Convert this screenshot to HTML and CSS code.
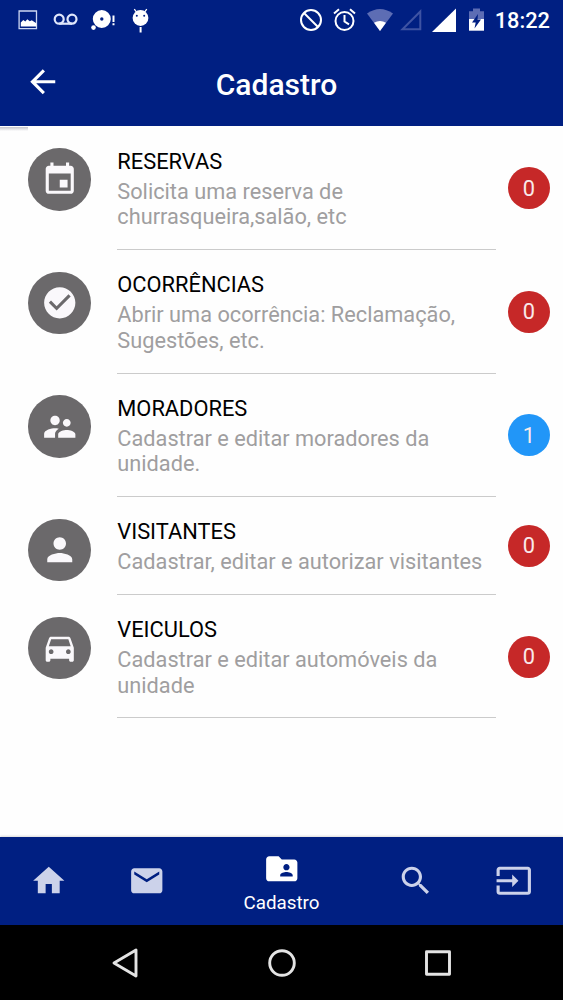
FILE: index.html
```
<!DOCTYPE html>
<html lang="pt-BR">
<head>
  <meta charset="UTF-8">
  <title>Cadastro</title>
  <link rel="stylesheet" href="styles.css">
</head>
<body>
  <div class="statusbar">
    <div class="notifications">
      <svg viewBox="-12 -12 24 24"><path d="M-8.7-9H8.7V8.6H-8.7z" fill="none" stroke="#cdd7f2" stroke-width="1.3"/><path d="M-7 6.500V2.500l2.500-2.500 2 1.500 2-2.200 2.500 2 2-1 4.500 3V6.500z"/></svg>
      <svg viewBox="-12 -12 24 24"><g fill="none" stroke="#dfe6fb" stroke-width="2.2"><circle cx="-6.6" cy="-.8" r="4.5"/><circle cx="6.2" cy="-.8" r="4.5"/><path d="M-6.6 3.7H6.2"/></g></svg>
      <svg viewBox="-12 -12 24 24"><path fill-rule="evenodd" d="M-10-1a9 9 0 1 0 18 0a9 9 0 1 0-18 0M-2.7-1a1.7 1.7 0 1 0 3.4 0a1.7 1.7 0 1 0-3.4 0"/><circle cx="-9.3" cy="7.6" r="2.3"/><path d="M9.7-4.5h2V2h-2zM9.7 3.3h2V5.200h-2z"/></svg>
      <svg viewBox="-12 -12 24 24"><path d="M-6.5-10.8l3 4M6-10.8l-3 4" stroke="#fff" stroke-width="1.3"/><circle cx="-.3" cy="-2" r="7.9"/><circle class="cut" cx="-4" cy="-4.2" r="1"/><circle class="cut" cx="3.4" cy="-4.2" r="1"/><path d="M-1.2 7H.8v5.5h-2z"/></svg>
    </div>
    <div class="system">
      <svg viewBox="-16.500 -16 32 32"><g fill="none" stroke="#fff" stroke-width="2"><circle cx="-.5" cy="0" r="10"/><path d="M-7.500-7L6.500 7"/></g></svg>
      <svg viewBox="-16.500 -16 32 32"><g fill="none" stroke="#fff" stroke-width="2"><circle cx="0" cy="1" r="9"/><path d="M0-5V1.5L4.5 4.3M-10.5-6.5l5-4.2M10.5-6.5l-5-4.2"/></g></svg>
      <svg viewBox="-19 -16 32 32"><path class="dim" d="M-13-6.500Q0-15.500 13-6.500L0 11z"/><path d="M-6 2.800Q0-.8 6 2.800L0 11z"/></svg>
      <svg viewBox="-17 -16 32 32"><path d="M9.3-8.5V9.2H-8.5z" fill="none" stroke="#3e53a3" stroke-width="2"/></svg>
      <svg viewBox="-17.500 -16 32 32"><path d="M11.5-11.5V12h-24z"/></svg>
      <svg viewBox="-16.500 -16 32 32"><path class="dim" d="M-7.5-8.7h4V-11.500h7v2.8h4V0h-15z"/><path d="M-7.500-1h15V10.700h-15z"/><path class="cut" d="M1.500-6L-4.500 2.500h3.700L-2 8.500 4.500-.5H1z"/></svg>
      <span class="clock">18:22</span>
    </div>
  </div>

  <header>
    <svg class="icon back" viewBox="0 0 24 24"><path d="M20 11H7.830l5.590-5.590L12 4l-8 8 8 8 1.410-1.410L7.830 13H20v-2z"/></svg>
    <h1>Cadastro</h1>
  </header>

  <main>
    <div class="item">
      <div class="avatar"><svg class="icon" viewBox="0 0 24 24"><path d="M17 12h-5v5h5v-5zM16 1v2H8V1H6v2H5c-1.110 0-1.990.9-1.990 2L3 19c0 1.100.89 2 2 2h14c1.100 0 2-.9 2-2V5c0-1.100-.9-2-2-2h-1V1h-2zm3 18H5V8h14v11z"/></svg></div>
      <div class="content">
        <h2>RESERVAS</h2>
        <p>Solicita uma reserva de<br>churrasqueira,salão, etc</p>
      </div>
      <span class="badge">0</span>
    </div>
    <div class="item">
      <div class="avatar"><svg class="icon" viewBox="0 0 24 24"><path d="M12 2C6.480 2 2 6.480 2 12s4.480 10 10 10 10-4.480 10-10S17.520 2 12 2zm-2 15l-5-5 1.410-1.410L10 14.170l7.590-7.590L19 8l-9 9z"/></svg></div>
      <div class="content">
        <h2>OCORRÊNCIAS</h2>
        <p>Abrir uma ocorrência: Reclamação,<br>Sugestões, etc.</p>
      </div>
      <span class="badge">0</span>
    </div>
    <div class="item">
      <div class="avatar"><svg class="icon" viewBox="0 0 24 24"><path d="M16.500 12c1.380 0 2.490-1.120 2.490-2.500S17.880 7 16.500 7 14 8.120 14 9.500s1.120 2.500 2.500 2.500zM9 11c1.660 0 2.990-1.340 2.990-3S10.660 5 9 5 6 6.340 6 8s1.340 3 3 3zm7.500 3c-1.830 0-5.500.92-5.500 2.750V19h11v-2.250c0-1.830-3.670-2.750-5.500-2.750zM9 13c-2.330 0-7 1.170-7 3.500V19h7v-2.250c0-.85.330-2.340 2.370-3.470C10.500 13.100 9.660 13 9 13z"/></svg></div>
      <div class="content">
        <h2>MORADORES</h2>
        <p>Cadastrar e editar moradores da<br>unidade.</p>
      </div>
      <span class="badge info">1</span>
    </div>
    <div class="item">
      <div class="avatar"><svg class="icon" viewBox="0 0 24 24"><path d="M12 12c2.210 0 4-1.790 4-4s-1.790-4-4-4-4 1.790-4 4 1.790 4 4 4zm0 2c-2.670 0-8 1.340-8 4v2h16v-2c0-2.660-5.330-4-8-4z"/></svg></div>
      <div class="content">
        <h2>VISITANTES</h2>
        <p>Cadastrar, editar e autorizar visitantes</p>
      </div>
      <span class="badge">0</span>
    </div>
    <div class="item">
      <div class="avatar"><svg class="icon" viewBox="0 0 24 24"><path d="M18.920 6.010C18.720 5.420 18.160 5 17.500 5h-11c-.66 0-1.210.42-1.420 1.010L3 12v8c0 .55.450 1 1 1h1c.55 0 1-.45 1-1v-1h12v1c0 .55.450 1 1 1h1c.55 0 1-.45 1-1v-8l-2.080-5.990zM6.500 16c-.83 0-1.500-.67-1.500-1.500S5.670 13 6.500 13s1.500.67 1.500 1.500S7.330 16 6.500 16zm11 0c-.83 0-1.500-.67-1.500-1.500s.67-1.500 1.500-1.500 1.500.67 1.500 1.500-.67 1.500-1.500 1.500zM5 11l1.500-4.500h11L19 11H5z"/></svg></div>
      <div class="content">
        <h2>VEICULOS</h2>
        <p>Cadastrar e editar automóveis da<br>unidade</p>
      </div>
      <span class="badge">0</span>
    </div>
  </main>

  <nav class="tabs">
    <a class="tab"><svg class="icon" viewBox="0 0 24 24"><path d="M10 20v-6h4v6h5v-8h3L12 3 2 12h3v8z"/></svg></a>
    <a class="tab"><svg class="icon" viewBox="0 0 24 24"><path d="M20 4H4c-1.100 0-1.990.9-1.990 2L2 18c0 1.100.9 2 2 2h16c1.100 0 2-.9 2-2V6c0-1.100-.9-2-2-2zm0 4l-8 5-8-5V6l8 5 8-5v2z"/></svg></a>
    <a class="tab active">
      <svg class="icon" viewBox="0 0 24 24"><path d="M20 6h-8l-2-2H4c-1.100 0-1.990.9-1.990 2L2 18c0 1.100.9 2 2 2h16c1.100 0 2-.9 2-2V8c0-1.100-.9-2-2-2zm-5 3c1.100 0 2 .9 2 2s-.9 2-2 2-2-.9-2-2 .9-2 2-2zm4 8h-8v-1c0-1.330 2.670-2 4-2s4 .67 4 2v1z"/></svg>
      <span>Cadastro</span>
    </a>
    <a class="tab"><svg class="icon" viewBox="0 0 24 24"><path d="M15.500 14h-.79l-.28-.27C15.410 12.590 16 11.110 16 9.500 16 5.910 13.090 3 9.500 3S3 5.910 3 9.500 5.910 16 9.500 16c1.610 0 3.090-.59 4.230-1.570l.27.28v.79l5 4.990L20.490 19l-4.990-5zm-6 0C7.010 14 5 11.990 5 9.500S7.010 5 9.500 5 14 7.010 14 9.500 11.990 14 9.500 14z"/></svg></a>
    <a class="tab"><svg class="icon" viewBox="0 0 24 24"><path d="M21 3.010H3c-1.100 0-2 .9-2 2V9h2V4.990h18v14.030H3V15H1v4.010c0 1.100.9 1.980 2 1.980h18c1.100 0 2-.88 2-1.980v-14c0-1.110-.9-2-2-2zM11 16l4-4-4-4v3H1v2h10v3z"/></svg></a>
  </nav>

  <div class="android-nav">
    <svg viewBox="-20 -20 40 40"><path d="M-11 0L11-13V13z"/></svg>
    <svg viewBox="-20 -20 40 40"><circle cx="0" cy="0" r="12.300"/></svg>
    <svg viewBox="-20 -20 40 40"><path d="M-11.500-11.300H11.500V11.300H-11.500z"/></svg>
  </div>
</body>
</html>
```

FILE: styles.css
```
* {
  box-sizing: border-box;
}

body {
  margin: 0;
  width: 563px;
  height: 1000px;
  display: flex;
  flex-direction: column;
  overflow: hidden;
  background: #fefefe;
  font-family: Roboto, sans-serif;
}

svg {
  display: block;
  flex: none;
  fill: #fff;
}

.icon {
  width: 37.5px;
  height: 37.5px;
}

/* status bar */
.statusbar {
  height: 39px;
  padding: 0 13px 0 9px;
  display: flex;
  justify-content: space-between;
  align-items: center;
  background: #001f82;
  color: #fff;
}

.notifications,
.system {
  display: flex;
  align-items: center;
}

.notifications svg {
  width: 37.6px;
  height: 24px;
  overflow: visible;
}

.system {
  gap: 1px;
}

.system svg {
  width: 32px;
  height: 32px;
}

.dim {
  fill: #5d6db4;
}

.cut {
  fill: #001f82;
}

.clock {
  margin: 2px 0 0 2px;
  font-size: 21.8px;
  font-weight: 500;
}

/* header */
header {
  position: relative;
  height: 87px;
  padding-right: 10px;
  display: flex;
  justify-content: center;
  align-items: center;
  background: #001f82;
  color: #fff;
}

header h1 {
  margin: 3px 0 0;
  font-size: 30px;
  font-weight: 500;
}

.back {
  position: absolute;
  left: 23.5px;
  top: 23.5px;
}

/* list */
main {
  flex: 1;
  padding-top: 0.5px;
}

main::before {
  content: "";
  display: block;
  width: 28px;
  height: 4px;
  margin-bottom: -4px;
  background: linear-gradient(#c4c4cc, #fefefe);
}

.item {
  display: flex;
  padding: 0 13px 0 28px;
}

.avatar {
  width: 62.5px;
  height: 62.5px;
  margin-top: 21.8px;
  flex: none;
  display: flex;
  align-items: center;
  justify-content: center;
  border-radius: 50%;
  background: #6b696b;
}

.avatar svg {
  fill: #faf8fb;
}

.content {
  width: 378.5px;
  margin-left: 26.8px;
  padding: 22.4px 0 19px;
  border-bottom: 1px solid #cbcbcb;
}

.content h2,
.content p {
  margin: 0;
  font-size: 21.85px;
  font-weight: 400;
  line-height: 25.7px;
  white-space: nowrap;
}

.content p {
  margin-top: 4px;
  font-size: 21.75px;
  color: #a09ea0;
}

.badge {
  width: 42px;
  height: 42px;
  margin-left: auto;
  align-self: center;
  display: flex;
  align-items: center;
  justify-content: center;
  border-radius: 50%;
  background: #c62828;
  color: #f9e9ea;
  font-size: 21.8px;
}

.badge.info {
  background: #2196f8;
}

/* bottom tabs */
.tabs {
  height: 88px;
  display: flex;
  background: #001f82;
  box-shadow: 0 -1px 2px rgba(0, 0, 0, 0.15);
}

.tab {
  width: 98px;
  display: flex;
  flex-direction: column;
  align-items: center;
  justify-content: center;
}

.tab svg {
  fill: #ccd2ea;
}

.tab.active {
  flex: 1;
  padding-top: 2px;
  color: #fff;
  font-size: 18.8px;
  line-height: 22px;
}

.tab.active svg {
  fill: #fff;
}

.tab.active span {
  margin-top: 4px;
}

/* android buttons */
.android-nav {
  height: 75px;
  padding: 0 105px;
  display: flex;
  justify-content: space-between;
  align-items: center;
  background: #000;
}

.android-nav svg {
  width: 40px;
  height: 40px;
  fill: none;
  stroke: #e4e4e4;
  stroke-width: 2.9;
  stroke-linejoin: round;
}
```
